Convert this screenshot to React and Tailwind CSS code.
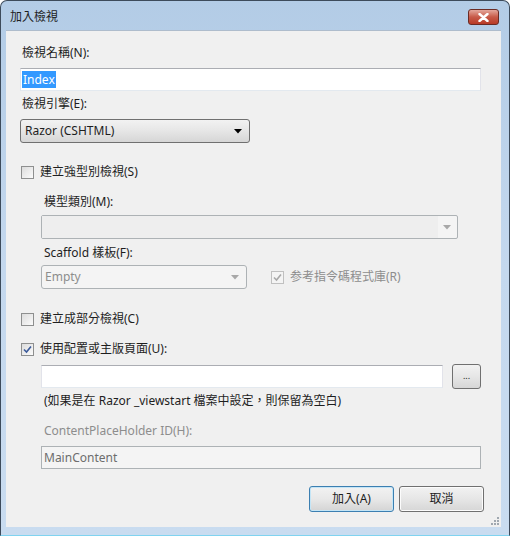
import React from 'react'

const font = { fontFamily: '"Noto Sans", "Noto Sans CJK TC", sans-serif' }

function CheckBox({ checked, disabled }) {
  return (
    <span
      className={`w-[13px] h-[13px] shrink-0 border flex items-center justify-center ${
        disabled ? 'border-[#c0c0c0] bg-[#f4f4f4]' : 'border-[#8e8f8f] bg-gradient-to-br from-[#dcdcdc] to-[#fbfbfb]'
      }`}
    >
      {checked && (
        <svg width="9" height="9" viewBox="0 0 9 9">
          <path
            d="M1 4.5 L3.5 7 L8 1.5"
            fill="none"
            stroke={disabled ? '#a8a8a8' : '#3b5a9a'}
            strokeWidth="1.6"
          />
        </svg>
      )}
    </span>
  )
}

function Caret({ color = '#000' }) {
  return (
    <svg width="8" height="5" viewBox="0 0 8 5">
      <path d="M0 0 H8 L4 4.5 Z" fill={color} />
    </svg>
  )
}

export default function App() {
  return (
    <div
      className="w-[511px] h-[536px] text-[12px] text-[#1e1e1e] bg-white overflow-hidden"
      style={font}
    >
      <div className="w-[510px] h-[536px] rounded-t-[7px] border border-[#3d4b5b] border-b-[#7fd3f0] bg-gradient-to-b from-[#b3cce6] via-[#c4d8ee] to-[#c9dcf0] flex flex-col">
        {/* title bar */}
        <div className="h-[29px] shrink-0 flex items-center pl-[9px] pr-[10px]">
          <span className="text-[12px] text-[#1e1e1e] mt-[3px]">加入檢視</span>
          <div className="ml-auto mt-[3px] w-[31px] h-[16px] rounded-[3px] border border-[#6b2b24] bg-gradient-to-b from-[#e3a79c] via-[#c75a48] to-[#b83a26] flex items-center justify-center">
            <svg width="11" height="9" viewBox="0 0 11 9">
              <path d="M1.5 1 L9.5 8 M9.5 1 L1.5 8" stroke="#fff" strokeWidth="2.4" strokeLinecap="round" />
            </svg>
          </div>
        </div>

        {/* client area */}
        <div className="ml-[5px] mr-[8px] h-[497px] bg-[#f0f0f0] border-t border-[#aebccc] flex flex-col pl-[14px] pr-[20px] relative">
          <div className="mt-[14px] h-[16px] leading-[16px] pl-[2px]">檢視名稱(N):</div>
          <div className="mt-[7px] h-[23px] bg-white border border-[#abadb3] border-l-[#e2e3ea] border-r-[#e2e3ea] border-b-[#e3e9ef] flex items-center pl-[1px]">
            <span className="bg-[#3399ff] text-white px-[1px] leading-[17px]">Index</span>
          </div>

          <div className="mt-[5px] h-[16px] leading-[16px] pl-[2px]">檢視引擎(E):</div>
          <div className="mt-[7px] w-[230px] h-[24px] rounded-[3px] border border-[#707070] bg-gradient-to-b from-[#f2f2f2] via-[#e6e6e6] to-[#d6d6d6] flex items-center pl-[4px] pr-[7px]">
            <span>Razor (CSHTML)</span>
            <span className="ml-auto flex"><Caret /></span>
          </div>

          <div className="mt-[21px] h-[16px] flex items-center gap-[6px] pl-[1px]">
            <CheckBox />
            <span>建立強型別檢視(S)</span>
          </div>

          <div className="pl-[21px] flex flex-col">
            <div className="mt-[14px] h-[16px] leading-[16px] pl-[3px]">模型類別(M):</div>
            <div className="mt-[5px] w-[417px] h-[24px] rounded-[2px] border border-[#adb2b5] bg-[#f4f4f4] flex items-center pr-[6px]">
              <div className="h-full w-[396px] bg-[#eeeeee]" />
              <span className="ml-auto flex"><Caret color="#a8a8a8" /></span>
            </div>

            <div className="mt-[6px] h-[16px] leading-[16px] pl-[3px]">Scaffold 樣板(F):</div>
            <div className="mt-[4px] h-[24px] flex items-center">
              <div className="w-[206px] h-[24px] rounded-[3px] border border-[#adb2b5] bg-[#f4f4f4] flex items-center pl-[3px] pr-[7px] text-[#8d8d8d]">
                <span>Empty</span>
                <span className="ml-auto flex"><Caret color="#a8a8a8" /></span>
              </div>
              <div className="ml-[24px] flex items-center gap-[6px] text-[#8d8d8d]">
                <CheckBox checked disabled />
                <span>参考指令碼程式庫(R)</span>
              </div>
            </div>
          </div>

          <div className="mt-[22px] h-[16px] flex items-center gap-[6px] pl-[1px]">
            <CheckBox />
            <span>建立成部分檢視(C)</span>
          </div>
          <div className="mt-[14px] h-[16px] flex items-center gap-[6px] pl-[1px]">
            <CheckBox checked />
            <span>使用配置或主版頁面(U):</span>
          </div>

          <div className="pl-[21px] flex flex-col">
            <div className="mt-[7px] h-[25px] flex items-center">
              <div className="w-[402px] h-[23px] bg-white border border-[#abadb3] border-l-[#e2e3ea] border-r-[#e2e3ea] border-b-[#e3e9ef]" />
              <div className="ml-[9px] w-[29px] h-[25px] rounded-[3px] border border-[#707070] bg-gradient-to-b from-[#f2f2f2] via-[#e6e6e6] to-[#d6d6d6] flex items-center justify-center text-[9px] leading-none pb-[2px]">
                ...
              </div>
            </div>
            <div className="mt-[4px] h-[16px] leading-[16px] pl-[3px]">
              (如果是在 Razor _viewstart 檔案中設定，則保留為空白)
            </div>

            <div className="mt-[14px] h-[16px] leading-[16px] pl-[3px] text-[#8d8d8d]">ContentPlaceHolder ID(H):</div>
            <div className="mt-[7px] w-[440px] h-[23px] border border-[#adb2b5] bg-[#f4f4f4] flex items-center pl-[2px] text-[#6d6d6d]">
              MainContent
            </div>
          </div>

          <div className="mt-[17px] flex justify-end gap-[5px] mr-[-3px]">
            <div className="w-[85px] h-[26px] rounded-[3px] border border-[#3c7fb1] bg-gradient-to-b from-[#f2f2f2] via-[#e8e8e8] to-[#d4d4d4] flex items-center justify-center shadow-[inset_0_0_0_1px_#c4e5f6]">
              加入(A)
            </div>
            <div className="w-[85px] h-[26px] rounded-[3px] border border-[#707070] bg-gradient-to-b from-[#f2f2f2] via-[#e6e6e6] to-[#d6d6d6] flex items-center justify-center shadow-[inset_0_0_0_1px_#fcfcfc]">
              取消
            </div>
          </div>

          <svg className="absolute right-[2px] bottom-[2px]" width="10" height="10" viewBox="0 0 10 10">
            <g fill="#a0a8b0">
              <rect x="8" y="2" width="2" height="2" />
              <rect x="5" y="5" width="2" height="2" />
              <rect x="8" y="5" width="2" height="2" />
              <rect x="2" y="8" width="2" height="2" />
              <rect x="5" y="8" width="2" height="2" />
              <rect x="8" y="8" width="2" height="2" />
            </g>
          </svg>
        </div>
      </div>
    </div>
  )
}
